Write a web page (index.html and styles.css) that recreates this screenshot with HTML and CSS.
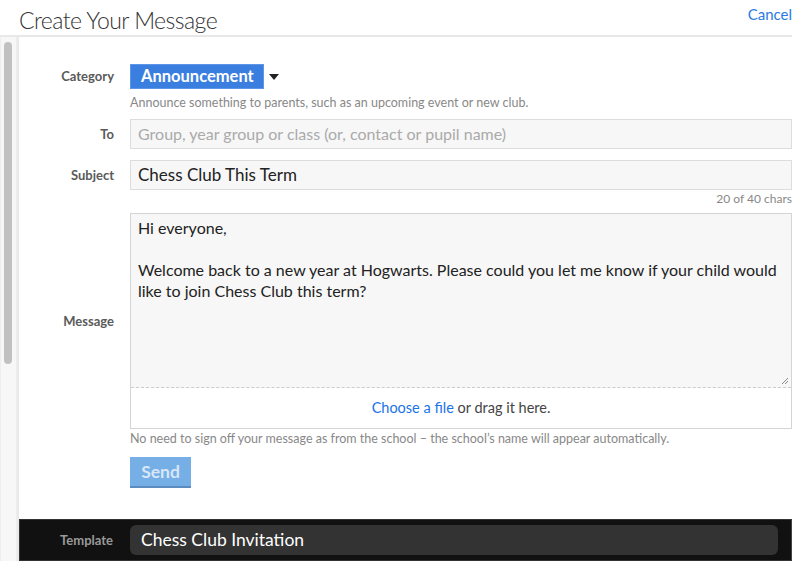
FILE: index.html
```html
<!DOCTYPE html>
<html lang="en">
<head>
<meta charset="UTF-8">
<title>Create Your Message</title>
<link rel="stylesheet" href="styles.css">
</head>
<body>
    <div class="page">
        <div class="header">
            <h1>Create Your Message</h1>
            <a class="cancel">Cancel</a>
        </div>
        <div class="main">
            <div class="scrollbar"><div class="thumb"></div></div>
            <div class="content">
                <div class="form">
                    <div class="row row-category">
                        <label>Category</label>
                        <div class="field">
                            <div class="category">
                                <span class="category-btn">Announcement</span>
                                <span class="caret"></span>
                            </div>
                            <div class="help">Announce something to parents, such as an upcoming event or new club.</div>
                        </div>
                    </div>
                    <div class="row">
                        <label>To</label>
                        <div class="field">
                            <div class="input placeholder">Group, year group or class (or, contact or pupil name)</div>
                        </div>
                    </div>
                    <div class="row">
                        <label>Subject</label>
                        <div class="field">
                            <div class="input">Chess Club This Term</div>
                            <div class="counter">20 of 40 chars</div>
                        </div>
                    </div>
                    <div class="row row-message">
                        <label>Message</label>
                        <div class="field">
                            <div class="message-box">
                                <div class="textarea">
                                    <p>Hi everyone,</p>
                                    <p>Welcome back to a new year at Hogwarts. Please could you let me know if your child would like to join Chess Club this term?</p>
                                    <svg class="grip" width="8" height="8" viewBox="0 0 8 8"><path d="M1 7L7 1M4 7L7 4" stroke="#888" stroke-width="1"/></svg>
                                </div>
                                <div class="dropzone"><a>Choose a file</a> or drag it here.</div>
                            </div>
                            <div class="help help-message">No need to sign off your message as from the school &ndash; the school&rsquo;s name will appear automatically.</div>
                        </div>
                    </div>
                    <div class="row">
                        <label></label>
                        <div class="field">
                            <button class="send" disabled>Send</button>
                        </div>
                    </div>
                </div>
                <div class="footer">
                    <label>Template</label>
                    <div class="template">Chess Club Invitation</div>
                </div>
            </div>
        </div>
    </div>
</body>
</html>
```

FILE: styles.css
```css
body {
    margin: 0;
    font-family: Lato, "Open Sans", sans-serif;
    color: #222;
    background: #fff;
}
.page {
    width: 792px;
}
.header {
    display: flex;
    justify-content: space-between;
    align-items: flex-start;
    height: 35px;
    border-bottom: 2px solid #e8e8e8;
}
.header h1 {
    margin: 5px 0 0 19px;
    font-size: 23px;
    font-weight: 300;
    letter-spacing: -0.55px;
    color: #333;
    line-height: 30px;
}
.cancel {
    margin-top: 5px;
    font-size: 15px;
    color: #2a7ae2;
    cursor: pointer;
}
.main {
    display: flex;
}
.scrollbar {
    width: 17px;
    height: 524px;
    flex: none;
    background: #f7f7f7;
    border-left: 1px solid #eee;
    border-right: 1px solid #eee;
    padding-top: 5px;
    box-sizing: border-box;
}
.thumb {
    width: 8px;
    height: 322px;
    margin-left: 3px;
    background: #c1c1c1;
    border-radius: 4px;
}
.content {
    flex: 1;
    border-left: 2px solid #e9e9e9;
}
.form {
    padding: 27px 0 31px;
}
.row {
    display: flex;
    align-items: flex-start;
}
.row label {
    width: 95px;
    flex: none;
    text-align: right;
    padding-right: 16px;
    font-size: 13px;
    font-weight: bold;
    color: #5a5a5a;
    line-height: 30px;
}
.row-category label {
    line-height: 25px;
}
.row-message {
    align-items: center;
}
.row-message label {
    margin-bottom: 26px;
}
.field {
    flex: 1;
}
.category {
    display: flex;
    align-items: center;
}
.category-btn {
    display: inline-block;
    height: 23px;
    line-height: 23px;
    padding: 0 9px 0 10px;
    background: #3a7ee0;
    border: 1px solid #5d95e8;
    color: #fff;
    font-size: 16.5px;
    font-weight: bold;
}
.caret {
    margin-left: 5px;
    border-left: 5.5px solid transparent;
    border-right: 5.5px solid transparent;
    border-top: 6px solid #222;
}
.help {
    margin: 6px 0 9px;
    font-size: 12.5px;
    color: #888;
    line-height: 15px;
}
.help-message {
    margin-top: 2px;
}
.input {
    height: 28px;
    line-height: 28px;
    padding: 0 7px;
    background: #f7f7f7;
    border: 1px solid #ddd;
    font-size: 17px;
    margin-bottom: 11px;
}
.placeholder {
    font-size: 16px;
    color: #aaa;
}
.counter {
    margin: -10px 0 7px;
    text-align: right;
    font-size: 12px;
    color: #888;
    line-height: 15px;
}
.message-box {
    border: 1px solid #d4d4d4;
}
.textarea {
    position: relative;
    height: 164px;
    padding: 3px 7px 6px;
    background: #f7f7f7;
    border-bottom: 1px dashed #ccc;
    font-size: 16px;
    line-height: 21px;
}
.textarea p {
    margin: 0 0 21px;
}
.grip {
    position: absolute;
    right: 2px;
    bottom: 2px;
}
.dropzone {
    height: 40px;
    line-height: 40px;
    text-align: center;
    font-size: 14.5px;
    color: #444;
}
.dropzone a {
    color: #1a73e8;
}
.send {
    margin-top: 2px;
    width: 61px;
    height: 31px;
    padding: 0;
    background: #76aee6;
    border: none;
    border-bottom: 2px solid #5a8cc0;
    color: #d7e7f7;
    font-family: inherit;
    font-size: 17.5px;
    font-weight: bold;
}
.footer {
    display: flex;
    align-items: center;
    height: 40px;
    background: #111;
    border: 1px solid #333;
    border-right: 1px solid #444;
}
.footer label {
    width: 93px;
    text-align: right;
    padding-right: 17px;
    font-size: 13px;
    font-weight: bold;
    color: #999;
}
.template {
    flex: 1;
    margin-right: 13px;
    height: 30px;
    line-height: 30px;
    padding: 0 11px;
    background: #333;
    border-radius: 6px;
    color: #fff;
    font-size: 17.5px;
}
```
